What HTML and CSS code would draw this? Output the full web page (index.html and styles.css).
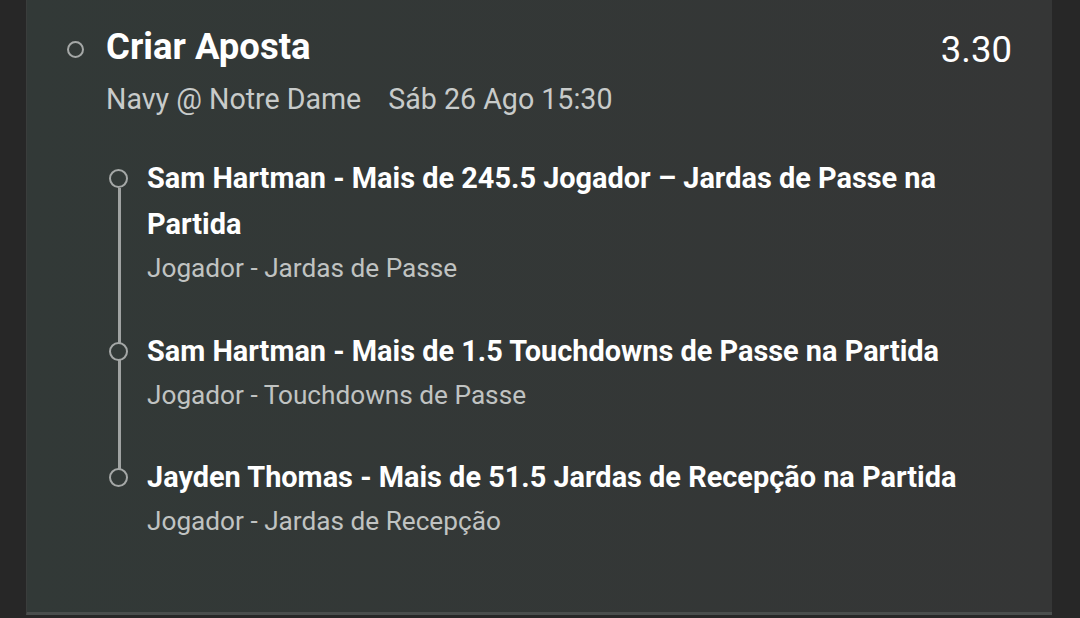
FILE: index.html
```html
<!DOCTYPE html>
<html lang="pt">
<head>
    <meta charset="UTF-8">
    <meta name="viewport" content="width=device-width, initial-scale=1.0">
    <title>Criar Aposta</title>
    <link rel="stylesheet" href="styles.css">
</head>
<body>

    <div class="card">
        <div class="bet-head">
            <span class="dot"></span>
            <div class="head-info">
                <div class="head-row">
                    <h1>Criar Aposta</h1>
                    <span class="odds">3.30</span>
                </div>
                <div class="meta">
                    <span>Navy @ Notre Dame</span>
                    <span>Sáb 26 Ago 15:30</span>
                </div>
            </div>
        </div>

        <ul class="legs">
            <li class="leg">
                <span class="leg-dot"></span>
                <div class="leg-info">
                    <div class="leg-title">Sam Hartman - Mais de 245.5 Jogador – Jardas de Passe na Partida</div>
                    <div class="leg-market">Jogador - Jardas de Passe</div>
                </div>
            </li>
            <li class="leg">
                <span class="leg-dot"></span>
                <div class="leg-info">
                    <div class="leg-title">Sam Hartman - Mais de 1.5 Touchdowns de Passe na Partida</div>
                    <div class="leg-market">Jogador - Touchdowns de Passe</div>
                </div>
            </li>
            <li class="leg">
                <span class="leg-dot"></span>
                <div class="leg-info">
                    <div class="leg-title">Jayden Thomas - Mais de 51.5 Jardas de Recepção na Partida</div>
                    <div class="leg-market">Jogador - Jardas de Recepção</div>
                </div>
            </li>
        </ul>
    </div>

</body>
</html>
```

FILE: styles.css
```css
body {
    font-family: Roboto, "Noto Sans", sans-serif;
    background: #272727;
    margin: 0;
    height: 618px;
    overflow: hidden;
}
.card {
    margin-left: 26px;
    width: 1026px;
    height: 615px;
    box-sizing: border-box;
    background: linear-gradient(to right, #323937, #353636);
    border-left: 1px solid #3a3d3c;
    border-bottom: 3px solid #4a4e4d;
    padding: 26px 40px 0 40px;
}
.bet-head {
    display: flex;
    align-items: flex-start;
}
.dot {
    width: 13px;
    height: 13px;
    border: 2px solid #a5a8a7;
    border-radius: 50%;
    margin-top: 15px;
    margin-right: 22px;
    flex-shrink: 0;
}
.head-info {
    flex: 1;
}
.head-row {
    display: flex;
    justify-content: space-between;
    align-items: flex-start;
}
h1 {
    font-size: 36.5px;
    font-weight: 700;
    color: #fff;
    margin: 0;
    line-height: 42px;
}
.odds {
    color: #fff;
    font-size: 36.5px;
    line-height: 46px;
    margin-top: 1px;
}
.meta {
    color: #c8cbca;
    font-size: 28.6px;
    line-height: 34px;
    margin-top: 9px;
    display: flex;
    gap: 27px;
}
.legs {
    list-style: none;
    margin: 39px 0 0 0;
    padding: 0 0 0 42px;
    position: relative;
}
.legs::before {
    content: "";
    position: absolute;
    left: 51px;
    top: 33px;
    bottom: 70px;
    width: 3px;
    background: #a0a3a2;
}
.leg {
    display: flex;
    align-items: flex-start;
    margin-bottom: 39px;
}
.leg:last-child {
    margin-bottom: 0;
}
.leg + .leg + .leg {
    margin-top: -1px;
}
.leg-dot {
    position: relative;
    width: 15px;
    height: 15px;
    border: 2px solid #a5a8a7;
    border-radius: 50%;
    background: #333a38;
    margin-top: 14px;
    margin-right: 19px;
    flex-shrink: 0;
}
.leg-info {
    max-width: 860px;
}
.leg-title {
    color: #fff;
    font-size: 28.9px;
    font-weight: 700;
    line-height: 46px;
}
.leg-market {
    color: #c0c3c2;
    font-size: 26.2px;
    line-height: 42px;
}
```
